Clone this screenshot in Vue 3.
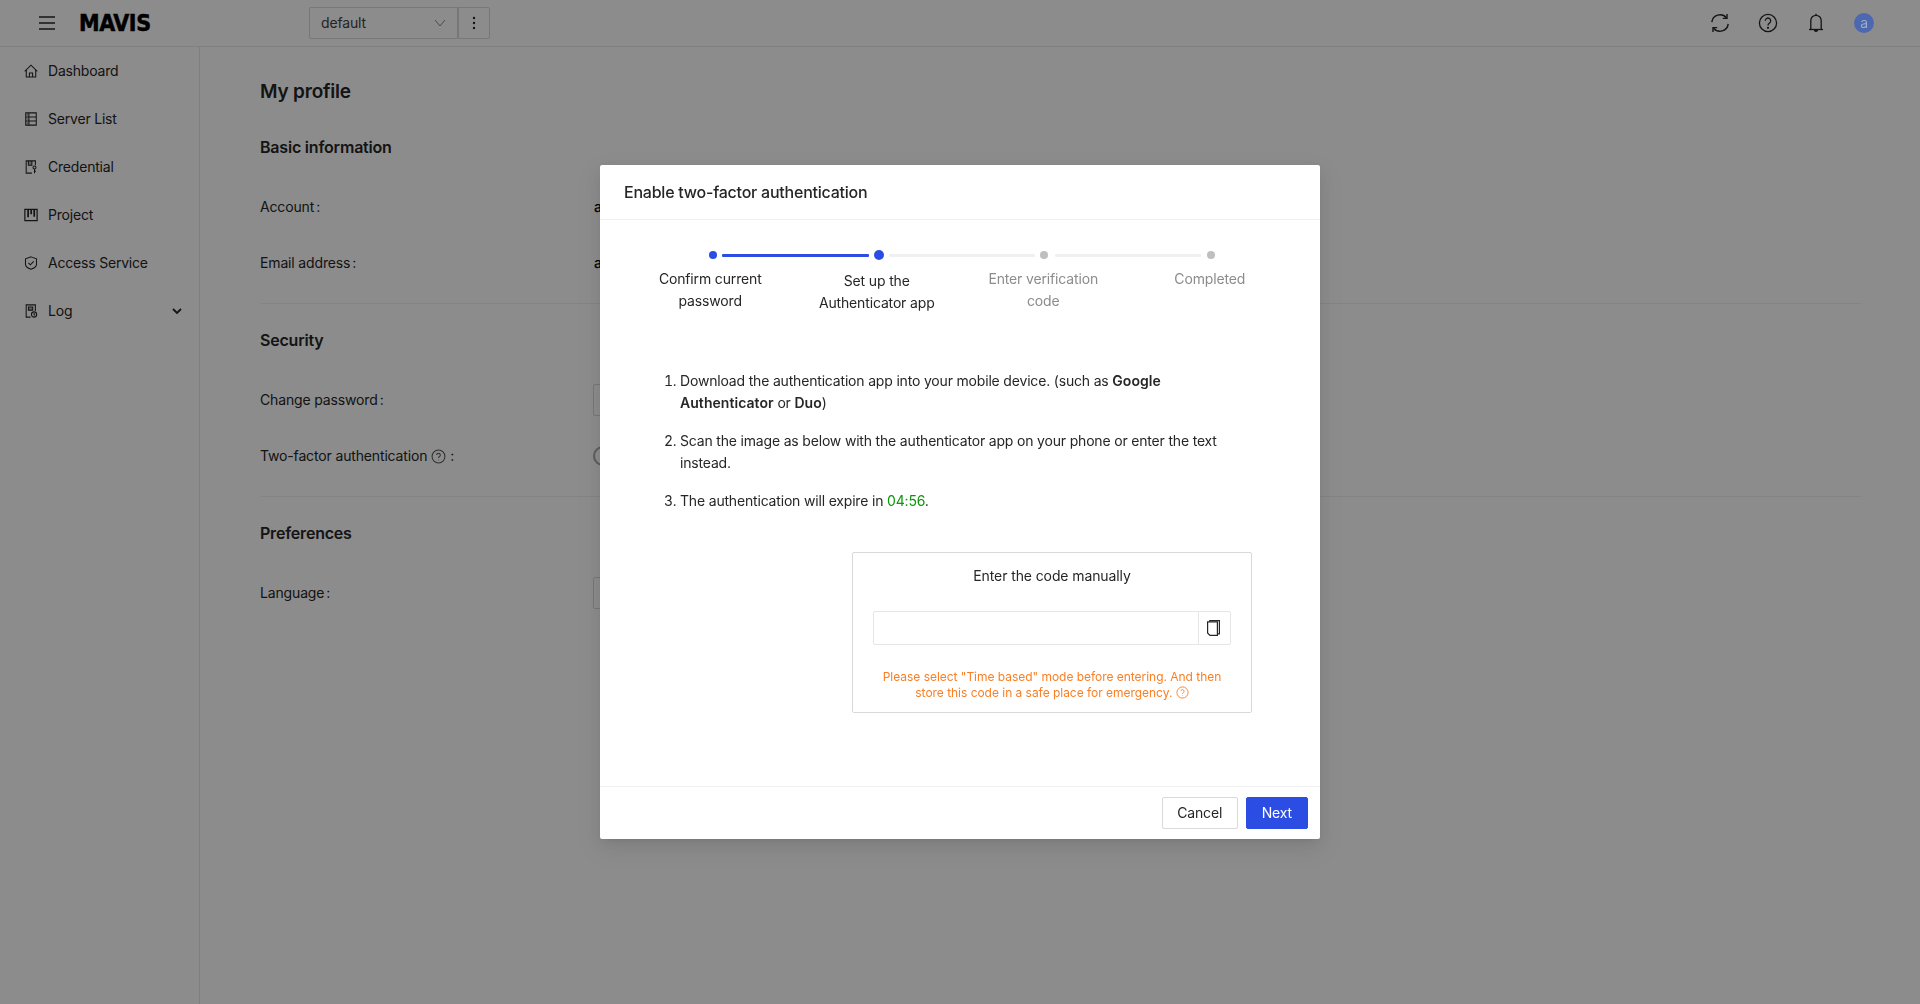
<script setup>
const navItems = [
  { label: 'Dashboard', icon: 'home' },
  { label: 'Server List', icon: 'server' },
  { label: 'Credential', icon: 'credential' },
  { label: 'Project', icon: 'project' },
  { label: 'Access Service', icon: 'shield' },
  { label: 'Log', icon: 'log', arrow: true },
]

const steps = [
  { label: 'Confirm current password', cls: 'step-one' },
  { label: 'Set up the Authenticator app', cls: 'step-two' },
  { label: 'Enter verification code', cls: 'step-wait' },
  { label: 'Completed', cls: 'step-wait' },
]
</script>

<template>
  <div class="page">
    <header class="topbar">
      <button class="burger" aria-label="menu">
        <svg width="16" height="14" viewBox="0 0 16 14" fill="none" stroke="#262626" stroke-width="1.3">
          <path d="M0 1h16M0 7h16M0 13h16" />
        </svg>
      </button>
      <span class="logo">MAVIS</span>
      <div class="org-select">
        <span>default</span>
        <svg width="12" height="8" viewBox="0 0 12 8" fill="none" stroke="#8c8c8c" stroke-width="1">
          <path d="M1 1l5 6 5-6" />
        </svg>
      </div>
      <div class="org-more">
        <svg width="4" height="14" viewBox="0 0 4 14" fill="#262626">
          <circle cx="2" cy="2" r="1.2" />
          <circle cx="2" cy="7" r="1.2" />
          <circle cx="2" cy="12" r="1.2" />
        </svg>
      </div>
      <div class="top-actions">
        <svg class="top-icon" viewBox="0 0 20 20" fill="none" stroke="#262626" stroke-width="1.4">
          <path d="M1.800 9.200A8.300 8.300 0 0 1 16.400 4.800" />
          <path d="M18.200 10.800A8.300 8.300 0 0 1 3.600 15.200" />
          <path d="M17 1V5.400H12.800" />
          <path d="M3 19V14.600H7.200" />
        </svg>
        <svg class="top-icon" viewBox="0 0 20 20" fill="none" stroke="#262626" stroke-width="1.3">
          <circle cx="10" cy="10" r="8.600" />
          <path d="M7.300 7.800a2.700 2.700 0 1 1 4.200 2.200c-1 .7-1.500 1.100-1.500 2.400" />
          <circle cx="10" cy="14.800" r=".5" fill="#262626" />
        </svg>
        <svg class="top-icon" viewBox="0 0 20 20" fill="none" stroke="#262626" stroke-width="1.3">
          <path d="M4.800 16.500V7.500a5.200 5.200 0 0 1 10.400 0v9" />
          <path d="M3 16.500h14" />
          <path d="M10 2.300V.8" />
          <path d="M8.600 17a1.400 1.400 0 0 0 2.800 0" fill="#262626" />
        </svg>
        <span class="avatar">a</span>
      </div>
    </header>

    <div class="layout">
      <nav class="sidebar">
        <div v-for="item in navItems" :key="item.label" class="nav-item">
          <svg class="nav-icon" viewBox="0 0 16 16" fill="none" stroke="#262626" stroke-width="1.200">
            <template v-if="item.icon === 'home'">
              <path d="M.8 8.400L8 1.400l7.200 7" />
              <path d="M2.600 6.800v8h10.800v-8" />
              <path d="M6.200 14.800v-4.600h3.600v4.600" />
            </template>
            <template v-else-if="item.icon === 'server'">
              <path d="M2 1h12v14H2z" />
              <path d="M2 5.600h12M2 10.300h12M5.600 1v14" />
              <path d="M3.200 3.300h1M3.200 8h1M3.200 12.700h1" />
            </template>
            <template v-else-if="item.icon === 'credential'">
              <path d="M9 15H2.500V1h10.500v5" />
              <path d="M5 1v5h4V1" fill="#262626" fill-opacity=".35" />
              <circle cx="12" cy="8.600" r="1.700" />
              <path d="M12 10.300V15M12 13h1.500" />
            </template>
            <template v-else-if="item.icon === 'project'">
              <path d="M1 1.500h14v13H1z" stroke-width="1.400" />
              <path d="M4.700 2v8.500M8.200 2v5M11.700 2v8" stroke-width="2" />
            </template>
            <template v-else-if="item.icon === 'shield'">
              <path d="M8 1l6.300 2.200v6.200c0 2.800-3.200 4.700-6.300 5.800-3.100-1.100-6.300-3-6.300-5.800V3.200z" />
              <path d="M5 7.800l2.300 2.300 3.800-4" />
            </template>
            <template v-else>
              <path d="M7.500 15H2.500V1h10.500v7" />
              <path d="M5 3.500h5v3.500H5z" fill="#262626" fill-opacity=".35" />
              <circle cx="11.500" cy="12" r="3" />
              <path d="M11.500 10.300V12l1.200.8" />
            </template>
          </svg>
          <span>{{ item.label }}</span>
          <svg v-if="item.arrow" class="nav-arrow" width="10" height="7" viewBox="0 0 10 7" fill="none" stroke="#262626" stroke-width="1.800">
            <path d="M1 1l4 4 4-4" />
          </svg>
        </div>
      </nav>

      <main class="content">
        <h1>My profile</h1>

        <h2>Basic information</h2>
        <div class="form-row"><label>Account<i>:</i></label><span class="value">a</span></div>
        <div class="form-row"><label>Email address<i>:</i></label><span class="value">a</span></div>
        <div class="divider"></div>

        <h2>Security</h2>
        <div class="form-row"><label>Change password<i>:</i></label><span class="ghost-btn"></span></div>
        <div class="form-row">
          <label>
            Two-factor authentication
            <svg class="hint" viewBox="0 0 14 14" fill="none" stroke="#595959" stroke-width="1">
              <circle cx="7" cy="7" r="6" />
              <path d="M5.300 5.600a1.700 1.700 0 1 1 2.700 1.400c-.6.400-1 .7-1 1.500M7 10v.6" />
            </svg>
            <i>:</i>
          </label>
          <span class="round-toggle"></span>
        </div>
        <div class="divider"></div>

        <h2>Preferences</h2>
        <div class="form-row"><label>Language<i>:</i></label><span class="ghost-btn"></span></div>
      </main>
    </div>

    <div class="mask">
      <section class="modal">
        <div class="modal-head">Enable two-factor authentication</div>

        <div class="modal-body">
          <div class="track">
            <span class="dot dot-done"></span>
            <span class="line line-done"></span>
            <span class="dot dot-active"></span>
            <span class="line"></span>
            <span class="dot"></span>
            <span class="line line-last"></span>
            <span class="dot"></span>
          </div>
          <div class="step-labels">
            <div v-for="step in steps" :key="step.label" class="step-label" :class="step.cls">{{ step.label }}</div>
          </div>

          <ol class="guide">
            <li>Download the authentication app into your mobile device. (such as <b>Google Authenticator</b> or <b>Duo</b>)</li>
            <li>Scan the image as below with the authenticator app on your phone or enter the text instead.</li>
            <li>The authentication will expire in <span class="timer">04:56</span>.</li>
          </ol>

          <div class="code-box">
            <div class="code-title">Enter the code manually</div>
            <div class="code-input">
              <div class="code-field"></div>
              <div class="code-copy">
                <svg width="13" height="16" viewBox="0 0 13 16" fill="none" stroke="#262626" stroke-width="1.200">
                  <path d="M2.800 1.800V.6h9.600v13.200h-2" />
                  <path d="M.6 1.800h9.800v13.600H3L.6 13z" />
                </svg>
              </div>
            </div>
            <p class="code-warn">
              Please select "Time based" mode before entering. And then store this code in a safe place for emergency.
              <svg class="warn-icon" viewBox="0 0 14 14" fill="none" stroke="#fa7f24" stroke-width="1">
                <circle cx="7" cy="7" r="6" />
                <path d="M5.300 5.600a1.700 1.700 0 1 1 2.700 1.400c-.6.400-1 .7-1 1.500M7 10v.6" />
              </svg>
            </p>
          </div>
        </div>

        <div class="modal-foot">
          <button class="btn btn-cancel">Cancel</button>
          <button class="btn btn-primary">Next</button>
        </div>
      </section>
    </div>
  </div>
</template>

<style>
html,
body {
  margin: 0;
  background: #fff;
}
</style>

<style scoped>
.page {
  height: 1004px;
  overflow: hidden;
  font-family: Inter, "Liberation Sans", sans-serif;
  font-size: 14px;
  line-height: 22px;
  letter-spacing: -.15px;
  color: #262626;
  background: #fff;
}
.topbar {
  height: 46px;
  display: flex;
  align-items: center;
  border-bottom: 1px solid #e8e8e8;
}
.burger {
  width: 16px;
  height: 14px;
  padding: 0;
  margin-left: 39px;
  border: 0;
  background: none;
  display: flex;
}
.logo {
  margin-left: 24px;
  width: 230px;
  font-family: "DejaVu Sans", sans-serif;
  font-stretch: condensed;
  font-size: 23px;
  font-weight: 700;
  line-height: 24px;
  letter-spacing: -.4px;
  color: #000;
  -webkit-text-stroke: .5px #000;
}
.org-select {
  width: 149px;
  height: 32px;
  box-sizing: border-box;
  padding: 0 11px;
  display: flex;
  align-items: center;
  justify-content: space-between;
  border: 1px solid #d9d9d9;
  border-radius: 2px 0 0 2px;
  color: #434343;
}
.org-more {
  width: 32px;
  height: 32px;
  box-sizing: border-box;
  display: flex;
  align-items: center;
  justify-content: center;
  border: 1px solid #d9d9d9;
  border-radius: 0 2px 2px 0;
}
.top-actions {
  margin-left: auto;
  margin-right: 46px;
  display: flex;
  align-items: center;
  gap: 28px;
}
.top-icon {
  width: 20px;
  height: 20px;
  display: block;
}
.avatar {
  width: 20px;
  height: 20px;
  border-radius: 50%;
  position: relative;
  z-index: 1001;
  background: #4c68b0;
  color: #a3acc4;
  font-size: 14px;
  line-height: 20px;
  text-align: center;
}
.layout {
  display: flex;
  height: 957px;
}
.sidebar {
  width: 199px;
  border-right: 1px solid #e8e8e8;
  flex: none;
  letter-spacing: -.2px;
}
.nav-item {
  height: 48px;
  display: flex;
  align-items: center;
  padding: 0 17px 0 24px;
  gap: 10px;
}
.nav-icon {
  width: 14px;
  height: 14px;
  flex: none;
}
.nav-arrow {
  margin-left: auto;
}
.content {
  flex: 1;
  padding: 31px 59px 0 60px;
}
h1 {
  margin: 0 0 29px;
  font-size: 19px;
  line-height: 28px;
  font-weight: 600;
  letter-spacing: -.2px;
}
h2 {
  margin: 0 0 32px;
  font-size: 16px;
  line-height: 24px;
  font-weight: 600;
  letter-spacing: -.2px;
}
.form-row {
  height: 32px;
  margin-bottom: 24px;
  display: flex;
  align-items: center;
}
.form-row label {
  width: 334px;
  flex: none;
  display: flex;
  align-items: center;
}
.form-row i {
  font-style: normal;
  margin-left: 2px;
}
.form-row .hint + i {
  margin-left: 4px;
}
.value {
  font-weight: 500;
  color: #000;
}
.hint {
  width: 15px;
  height: 15px;
  margin-left: 4px;
}
.divider {
  height: 1px;
  margin-bottom: 24px;
  background: #f0f0f0;
}
.ghost-btn {
  width: 60px;
  height: 32px;
  box-sizing: border-box;
  margin-left: -1px;
  border: 1px solid #d9d9d9;
  border-radius: 2px;
}
.round-toggle {
  width: 20px;
  height: 20px;
  margin-left: -1px;
  border: 2px solid #a6a6a6;
  border-radius: 50%;
  box-sizing: border-box;
}
.mask {
  position: fixed;
  inset: 0;
  z-index: 1000;
  display: flex;
  align-items: center;
  justify-content: center;
  background: rgba(0, 0, 0, .45);
}
.modal {
  width: 720px;
  height: 674px;
  display: flex;
  flex-direction: column;
  border-radius: 2px;
  background: #fff;
  box-shadow: 0 6px 16px rgba(0, 0, 0, .08), 0 3px 6px -4px rgba(0, 0, 0, .12), 0 9px 28px 8px rgba(0, 0, 0, .05);
}
.modal-head {
  height: 55px;
  flex: none;
  box-sizing: border-box;
  padding: 0 24px;
  display: flex;
  align-items: center;
  font-size: 16px;
  font-weight: 500;
  letter-spacing: -.23px;
  border-bottom: 1px solid #f0f0f0;
}
.modal-body {
  flex: 1;
  display: flex;
  flex-direction: column;
  padding-top: 30px;
}
.track {
  height: 10px;
  margin-left: 109px;
  display: flex;
  align-items: center;
}
.dot {
  width: 8px;
  height: 8px;
  border-radius: 50%;
  background: #bfbfbf;
  flex: none;
}
.dot-done {
  background: #2b4de3;
}
.dot-active {
  width: 10px;
  height: 10px;
  background: #2b4de3;
}
.line {
  width: 146px;
  height: 3px;
  margin: 0 5px;
  border-radius: 1px;
  background: #f0f0f0;
  flex: none;
}
.line-done {
  width: 147px;
  background: #2b4de3;
}
.line-last {
  margin: 0 6px 0 7px;
}
.step-labels {
  margin: 8px 0 0 27px;
  width: 666px;
  display: grid;
  grid-template-columns: repeat(4, 1fr);
}
.step-label {
  padding: 0 24px;
  text-align: center;
}
.step-two {
  margin-top: 2px;
}
.step-wait {
  color: #8c8c8c;
}
.guide {
  width: 570px;
  margin: 56px 0 0;
  padding: 0 0 0 80px;
  letter-spacing: -.18px;
}
.guide li {
  margin-bottom: 16px;
}
.guide li:last-child {
  margin-bottom: 0;
}
.guide b {
  font-weight: 600;
  letter-spacing: .05px;
}
.timer {
  color: #0a960a;
}
.code-box {
  width: 400px;
  height: 161px;
  box-sizing: border-box;
  margin: 40px 68px 0 auto;
  padding: 12px 20px 0;
  border: 1px solid #d9d9d9;
  border-radius: 2px;
  text-align: center;
}
.code-title {
  margin-bottom: 24px;
  letter-spacing: -.1px;
}
.code-input {
  height: 34px;
  box-sizing: border-box;
  display: flex;
  border: 1px solid #e6e6e6;
  border-radius: 2px;
}
.code-field {
  flex: 1;
}
.code-copy {
  width: 32px;
  box-sizing: border-box;
  padding-right: 2px;
  display: flex;
  align-items: center;
  justify-content: center;
  border-left: 1px solid #e6e6e6;
}
.code-warn {
  margin: 24px 0 0;
  font-size: 12px;
  line-height: 16px;
  letter-spacing: -.03px;
  color: #fa7f24;
}
.warn-icon {
  width: 13px;
  height: 13px;
  vertical-align: -2px;
}
.modal-foot {
  height: 53px;
  box-sizing: border-box;
  flex: none;
  padding: 10px 12px 0 0;
  display: flex;
  justify-content: flex-end;
  align-items: flex-start;
  gap: 8px;
  border-top: 1px solid #f0f0f0;
}
.btn {
  height: 32px;
  padding: 0 15px;
  border: 1px solid #d9d9d9;
  border-radius: 2px;
  background: #fff;
  color: #262626;
  font: inherit;
  letter-spacing: inherit;
}
.btn-cancel {
  padding: 0 14.500px;
}
.btn-primary {
  border-color: #2b4de3;
  background: #2b4de3;
  color: #fff;
}
</style>
